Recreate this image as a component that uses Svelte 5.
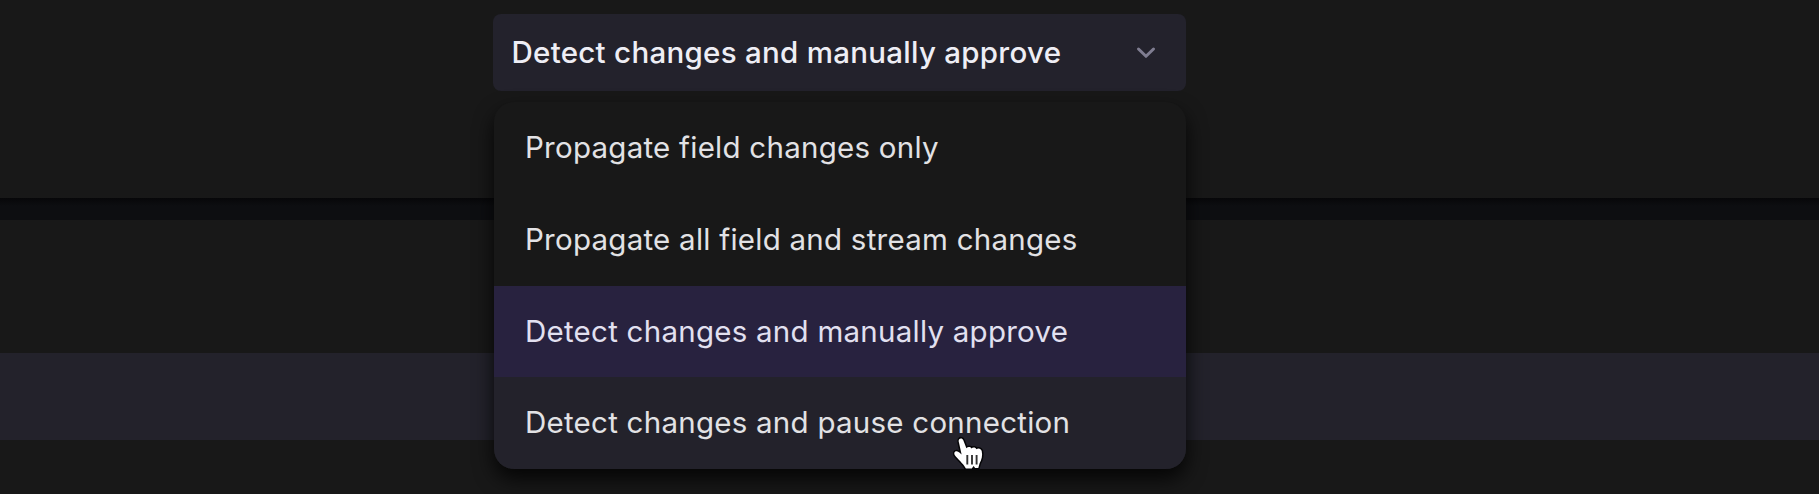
<script>
  const options = [
    'Propagate field changes only',
    'Propagate all field and stream changes',
    'Detect changes and manually approve',
    'Detect changes and pause connection',
  ];
  const selected = 2;
  const hovered = 3;
</script>

<main>
  <section class="card top">
    <div class="field">
      <button class="select" type="button">
        <span>{options[selected]}</span>
        <svg width="20" height="14" viewBox="0 0 20 14" fill="none">
          <path d="M2.5 3 L10 10.3 L17.5 3" stroke="#7f7d91" stroke-width="3" stroke-linecap="round" stroke-linejoin="round" />
        </svg>
      </button>
      <ul class="menu">
        {#each options as option, i}
          <li class:selected={i === selected} class:hovered={i === hovered}>{option}</li>
        {/each}
      </ul>
    </div>
  </section>
  <section class="card bottom">
    <div class="band"></div>
  </section>
  <svg class="cursor" width="36" height="38" viewBox="0 0 36 38">
    <path
      d="M7.2 4.2 C8.4 2.8 10.6 3.3 11.2 5 L14.4 13.2 C15.8 11.6 18.6 11.8 19.4 13.4 C21 12 23.8 12.4 24.4 14.2 C26.2 12.8 29 13.4 29.7 16 C30.8 20.6 29.6 24.6 27.6 28.2 L26.3 32.9 L23.1 32.9 L21.6 31 L19.8 33.6 L13.9 33.6 C12.2 29.8 8 26.2 3.6 21.2 C1.4 18.5 2.2 16 4.8 16.2 C6.6 16.4 8.2 18 9.6 19.5 L7 7.8 C6.5 6.2 6.5 5 7.2 4.2 Z"
      fill="#fff" stroke="#050507" stroke-width="3" stroke-linejoin="round" paint-order="stroke"
    />
    <path d="M15.3 20 V29.5 M20 20 V29.5 M24.6 20 V29.5" stroke="#333" stroke-width="1.9" />
  </svg>
</main>

<style>
  :global(body) {
    margin: 0;
    background: #0c0d10;
  }
  main {
    position: relative;
    height: 494px;
    overflow: hidden;
    display: flex;
    flex-direction: column;
    gap: 22px;
    background: linear-gradient(#070709 198px, #0d0e11 206px);
    font-family: Inter, sans-serif;
    font-size: 29.5px;
  }
  .card {
    background: #181818;
  }
  .top {
    box-sizing: border-box;
    height: 198px;
    flex: none;
    padding: 14px 0 0 492.5px;
  }
  .field {
    position: relative;
    width: 693.5px;
  }
  .select {
    display: flex;
    align-items: center;
    justify-content: space-between;
    box-sizing: border-box;
    width: 100%;
    height: 77px;
    padding: 0 30px 0 19px;
    border: 0;
    border-radius: 8px;
    background: #23222c;
    color: #eeeef5;
    font: inherit;
    font-weight: 500;
    letter-spacing: 0.28px;
    white-space: nowrap;
  }
  .select span {
    margin-top: -2px;
  }
  .menu {
    position: absolute;
    z-index: 1;
    top: 88px;
    left: 1px;
    right: 0;
    margin: 0;
    padding: 0;
    list-style: none;
    overflow: hidden;
    border-radius: 20px;
    background: #181818;
    color: #e2e2e5;
    font-weight: 400;
    letter-spacing: 0.25px;
    box-shadow: 0 10px 20px rgba(0, 0, 0, 0.8);
  }
  li {
    height: 92px;
    padding-left: 31.5px;
    line-height: 90px;
    white-space: nowrap;
  }
  .selected {
    height: 91px;
    background: #28223f;
    color: #e2e0f0;
  }
  .hovered {
    background: #23222b;
  }
  .bottom {
    flex: 1;
    padding-top: 133px;
  }
  .band {
    height: 87px;
    background: #23222b;
  }
  .cursor {
    position: absolute;
    z-index: 2;
    left: 951.5px;
    top: 435px;
  }
</style>
